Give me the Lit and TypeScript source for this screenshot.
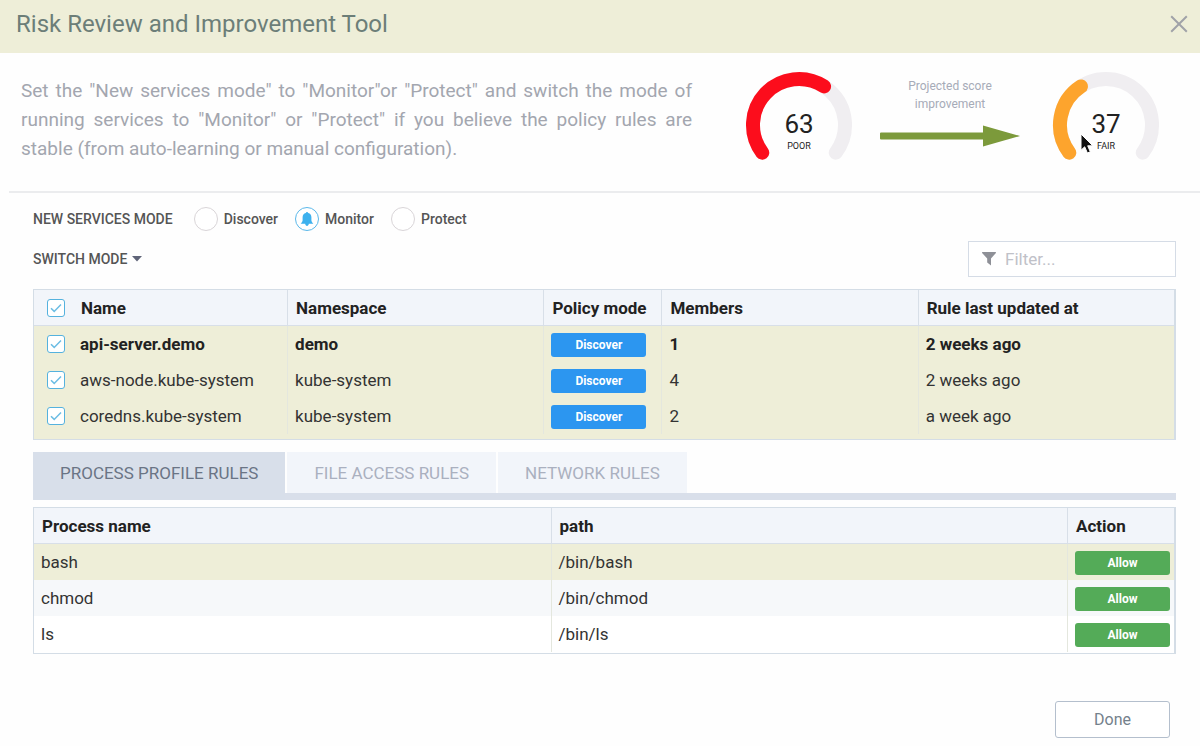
import { LitElement, html, css, svg, nothing } from "lit";
import { customElement, property, state } from "lit/decorators.js";
import { classMap } from "lit/directives/class-map.js";

interface Service {
  name: string;
  namespace: string;
  mode: string;
  members: number;
  updated: string;
}

interface ProcessRule {
  name: string;
  path: string;
  action: string;
}

const SERVICES: Service[] = [
  { name: "api-server.demo", namespace: "demo", mode: "Discover", members: 1, updated: "2 weeks ago" },
  { name: "aws-node.kube-system", namespace: "kube-system", mode: "Discover", members: 4, updated: "2 weeks ago" },
  { name: "coredns.kube-system", namespace: "kube-system", mode: "Discover", members: 2, updated: "a week ago" },
];

const RULES: ProcessRule[] = [
  { name: "bash", path: "/bin/bash", action: "Allow" },
  { name: "chmod", path: "/bin/chmod", action: "Allow" },
  { name: "ls", path: "/bin/ls", action: "Allow" },
];

const MODES = ["Discover", "Monitor", "Protect"];
const TABS = ["PROCESS PROFILE RULES", "FILE ACCESS RULES", "NETWORK RULES"];

/** Arc on a circle of radius 46 centred at 54,54; angles in degrees clockwise from the top. */
function arc(from: number, to: number): string {
  const point = (deg: number) => {
    const a = (deg * Math.PI) / 180;
    return `${(54 + 46 * Math.sin(a)).toFixed(2)} ${(54 - 46 * Math.cos(a)).toFixed(2)}`;
  };
  return `M${point(from)}A46 46 0 ${to - from > 180 ? 1 : 0} 1 ${point(to)}`;
}

@customElement("score-gauge")
export class ScoreGauge extends LitElement {
  @property({ type: Number }) score = 0;
  @property() rating = "";
  @property() color = "";

  static styles = css`
    :host {
      display: block;
    }
    .dial {
      display: block;
      width: 108px;
      height: 98px;
    }
    .arc {
      fill: none;
      stroke-width: 14px;
      stroke-linecap: round;
    }
    .track {
      stroke: #f0eef1;
    }
    .score,
    .rating {
      font-family: Roboto, sans-serif;
      text-anchor: middle;
      fill: #222;
    }
    .score {
      font-size: 26px;
    }
    .rating {
      font-size: 9px;
    }
  `;

  render() {
    return html`
      <svg class="dial" viewBox="0 0 108 98" role="img" aria-label="${this.score} ${this.rating}">
        <path class="arc track" d=${arc(-127, 127)} />
        <path class="arc" stroke=${this.color} d=${arc(-127, -127 + (254 * this.score) / 100)} />
        ${svg`<text class="score" x="54" y="62">${this.score}</text>
        <text class="rating" x="54" y="78">${this.rating}</text>`}
      </svg>
    `;
  }
}

@customElement("app-root")
export class AppRoot extends LitElement {
  @state() private mode = "Monitor";
  @state() private tab = 0;

  static styles = css`
    :host {
      display: block;
      min-height: 100vh;
      background: #fefefe;
      color: #333;
      font-family: Roboto, sans-serif;
      font-size: 17px;
    }
    * {
      box-sizing: border-box;
    }
    button {
      font: inherit;
      cursor: pointer;
    }
    .header {
      display: flex;
      align-items: center;
      justify-content: space-between;
      height: 53px;
      padding: 0 12px 6px 16px;
      background: #eeeed8;
    }
    .title {
      margin: 0;
      font-size: 24px;
      font-weight: 400;
      color: #6c7e78;
    }
    .close {
      display: flex;
      padding: 0;
      border: 0;
      background: none;
    }
    .intro {
      display: flex;
      align-items: flex-start;
      margin-left: 9px;
      height: 140px;
      padding: 18px 40px 0 12px;
      border-bottom: 2px solid #ebecee;
    }
    .advice {
      flex: 1;
      margin: 5px 53px 0 0;
      font-size: 19px;
      line-height: 29px;
      text-align: justify;
      color: #a3a6af;
    }
    .projection {
      display: flex;
      flex-direction: column;
      align-items: center;
      width: 140px;
      margin: 6px 32px 0 27px;
      font-size: 12px;
      line-height: 18px;
      text-align: center;
      color: #a6abb8;
    }
    .projection p {
      width: 100px;
      margin: 0 0 12px;
    }
    .projected {
      position: relative;
    }
    .pointer {
      position: absolute;
      left: 28px;
      top: 62px;
    }
    .body {
      padding: 13px 24px 0 33px;
    }
    .modes {
      display: flex;
      align-items: center;
      gap: 17px;
      height: 26px;
      font-size: 14px;
      font-weight: 500;
      color: #555;
    }
    .caption {
      margin-right: 4px;
    }
    .mode {
      display: flex;
      align-items: center;
      gap: 6px;
    }
    .dot {
      display: grid;
      place-items: center;
    }
    .dot > * {
      grid-area: 1 / 1;
    }
    .radio {
      appearance: none;
      width: 24px;
      height: 24px;
      margin: 0;
      border: 1px solid #d9d5d8;
      border-radius: 50%;
      background: #fff;
    }
    .radio:checked {
      border-color: #5bb8ea;
    }
    .bell,
    .tick {
      z-index: 1;
      pointer-events: none;
    }
    .toolbar {
      display: flex;
      align-items: center;
      justify-content: space-between;
      margin: 9px 0 12px;
    }
    .switch {
      display: flex;
      align-items: center;
      gap: 5px;
      padding: 0;
      border: 0;
      background: none;
      font-size: 14px;
      font-weight: 500;
      color: #555;
    }
    .filter {
      display: flex;
      align-items: center;
      gap: 9px;
      width: 208px;
      height: 36px;
      padding: 0 13px;
      border: 1px solid #d5dce6;
      background: #fff;
    }
    .filter-text {
      flex: 1;
      min-width: 0;
      padding: 0;
      border: 0;
      outline: 0;
      background: none;
      font: inherit;
    }
    .filter-text::placeholder {
      color: #c0c1c8;
    }
    .grid {
      border: 1px solid #d4dde6;
      border-right-width: 2px;
    }
    .services {
      padding-bottom: 5px;
      background: #eeeed8;
    }
    .rules {
      padding-bottom: 1px;
      background: #fff;
    }
    table {
      width: 100%;
      table-layout: fixed;
      border-collapse: separate;
      border-spacing: 0;
    }
    th,
    td {
      height: 36px;
      padding: 0 7px;
      border-left: 1px solid #e4e7de;
      text-align: left;
      white-space: nowrap;
    }
    th {
      padding-left: 8px;
      border-left-color: #d8dfe8;
      border-bottom: 1px solid #d8dfe8;
      background: #f2f5fa;
      font-weight: 700;
      color: #222;
    }
    th:first-child,
    td:first-child {
      border-left: 0;
    }
    .services th:first-child,
    .services td:first-child {
      padding-left: 13px;
    }
    .name {
      width: 22.2%;
    }
    .policy {
      width: 118px;
    }
    .action {
      width: 107px;
    }
    .current {
      font-weight: 700;
      color: #222;
    }
    .named {
      display: flex;
      align-items: center;
      gap: 15px;
    }
    th .named {
      gap: 16px;
    }
    .check {
      appearance: none;
      width: 18px;
      height: 18px;
      margin: 0;
      border: 1px solid #55b2de;
      border-radius: 3px;
      background: #fff;
    }
    .check:not(:checked) + .tick {
      visibility: hidden;
    }
    .rules tbody tr:nth-child(1) {
      background: #eeeed8;
    }
    .rules tbody tr:nth-child(2) {
      background: #f6f8fa;
    }
    .status {
      padding-top: 2px;
    }
    .badge {
      display: block;
      height: 24px;
      border-radius: 3px;
      background: #2c96f0;
      font-size: 12px;
      font-weight: 700;
      line-height: 24px;
      text-align: center;
      color: #fff;
    }
    .services .badge {
      margin-right: 8px;
    }
    .allow {
      margin-right: -3px;
      background: #54ab58;
    }
    .tabs {
      display: flex;
      align-items: flex-start;
      gap: 2px;
      height: 48px;
      margin: 12px 0 7px;
      background: linear-gradient(#d9dfea, #d9dfea) bottom / 100% 7px no-repeat;
    }
    .tab {
      height: 41px;
      padding: 0 27px;
      border: 0;
      background: #f2f5fa;
      color: #aab0bf;
    }
    .tab.active {
      height: 48px;
      padding-bottom: 7px;
      background: #d8dfea;
      color: #6a7485;
    }
    .footer {
      display: flex;
      justify-content: flex-end;
      padding: 47px 30px 8px;
    }
    .done {
      width: 115px;
      height: 37px;
      border: 1px solid #b4bfcd;
      border-radius: 3px;
      background: #fff;
      font-size: 16px;
      color: #74818c;
    }
  `;

  private checkbox(label: string) {
    return html`<span class="dot">
      <input class="check" type="checkbox" aria-label=${label} checked />
      <svg class="tick" width="12" height="10" viewBox="0 0 12 10" aria-hidden="true">
        <path d="M1 5.2L4.2 8.4L11 1.4" fill="none" stroke="#6cbde4" stroke-width="1.5" />
      </svg>
    </span>`;
  }

  private modeOption(mode: string) {
    return html`<label class="mode">
      <span class="dot">
        <input class="radio" type="radio" name="mode" .value=${mode} ?checked=${mode === this.mode}
          @change=${() => (this.mode = mode)} />
        ${mode === this.mode
          ? html`<svg class="bell" width="14" height="14" viewBox="0 0 14 14" aria-hidden="true">
              <path fill="#3db1ee"
                d="M7 0C6.3 0 5.9.4 5.8.9C3.7 1.4 2.6 3 2.6 5.2V8.2C2.6 9.6 1.7 10.4.6 11.8H5.2C5.3 13.2 6.1 13.9 7 13.9S8.7 13.2 8.8 11.8H13.4C12.3 10.4 11.4 9.6 11.4 8.2V5.2C11.4 3 10.3 1.4 8.2.9C8.1.4 7.7 0 7 0Z" />
            </svg>`
          : nothing}
      </span>
      ${mode}
    </label>`;
  }

  render() {
    return html`
      <header class="header">
        <h1 class="title">Risk Review and Improvement Tool</h1>
        <button class="close" aria-label="Close">
          <svg width="18" height="18" viewBox="0 0 18 18">
            <path d="M1.2 1.2L16.8 16.8M16.8 1.2L1.2 16.8" fill="none" stroke="#a0a2a8" stroke-width="2" />
          </svg>
        </button>
      </header>

      <section class="intro">
        <p class="advice">
          Set the "New services mode" to "Monitor"or "Protect" and switch the mode of running services to
          "Monitor" or "Protect" if you believe the policy rules are stable (from auto-learning or manual
          configuration).
        </p>
        <score-gauge score="63" rating="POOR" color="#fc0d1c"></score-gauge>
        <div class="projection">
          <p>Projected score improvement</p>
          <svg width="140" height="22" viewBox="0 0 140 22" aria-hidden="true">
            <path d="M1 7.5H103V.5L140 11L103 21.5V14.5H1Q0 14.5 0 13.5V8.5Q0 7.5 1 7.5Z" fill="#7c9a3b" />
          </svg>
        </div>
        <div class="projected">
          <score-gauge score="37" rating="FAIR" color="#fda42d"></score-gauge>
          <svg class="pointer" width="14" height="22" viewBox="0 0 14 22" aria-hidden="true">
            <path d="M1 1V17.2L4.7 13.8L7.4 20L10.3 18.8L7.7 12.8H12.8Z" fill="#111" stroke="#fff" stroke-width="1" />
          </svg>
        </div>
      </section>

      <main class="body">
        <div class="modes" role="radiogroup" aria-labelledby="mode-caption">
          <span class="caption" id="mode-caption">NEW SERVICES MODE</span>
          ${MODES.map((m) => this.modeOption(m))}
        </div>

        <div class="toolbar">
          <button class="switch">
            SWITCH MODE
            <svg width="10" height="6" viewBox="0 0 10 6" aria-hidden="true"><path d="M0 0H10L5 5.5Z" fill="#5f6478" /></svg>
          </button>
          <label class="filter">
            <svg width="14" height="14" viewBox="0 0 14 14" aria-hidden="true">
              <path d="M.3 0H13.7Q14.2.7 13.7 1.2L9 6.4V13.6L5.2 10.6V6.4L.3 1.2Q-.2.7.3 0Z" fill="#8e9097" />
            </svg>
            <input class="filter-text" type="text" placeholder="Filter..." aria-label="Filter" />
          </label>
        </div>

        <div class="grid services">
          <table>
            <thead>
              <tr>
                <th class="name"><div class="named">${this.checkbox("Select all")}Name</div></th>
                <th>Namespace</th>
                <th class="policy">Policy mode</th>
                <th>Members</th>
                <th>Rule last updated at</th>
              </tr>
            </thead>
            <tbody>
              ${SERVICES.map(
                (s, i) => html`<tr class=${classMap({ current: i === 0 })}>
                  <td><div class="named">${this.checkbox(s.name)}${s.name}</div></td>
                  <td>${s.namespace}</td>
                  <td class="status"><span class="badge">${s.mode}</span></td>
                  <td>${s.members}</td>
                  <td>${s.updated}</td>
                </tr>`
              )}
            </tbody>
          </table>
        </div>

        <div class="tabs" role="tablist">
          ${TABS.map(
            (t, i) => html`<button role="tab" aria-selected=${i === this.tab ? "true" : "false"}
              class=${classMap({ tab: true, active: i === this.tab })} @click=${() => (this.tab = i)}>${t}</button>`
          )}
        </div>

        <div class="grid rules">
          <table>
            <thead>
              <tr>
                <th>Process name</th>
                <th>path</th>
                <th class="action">Action</th>
              </tr>
            </thead>
            <tbody>
              ${RULES.map(
                (r) => html`<tr>
                  <td>${r.name}</td>
                  <td>${r.path}</td>
                  <td class="status"><span class="badge allow">${r.action}</span></td>
                </tr>`
              )}
            </tbody>
          </table>
        </div>
      </main>

      <footer class="footer"><button class="done">Done</button></footer>
    `;
  }
}
